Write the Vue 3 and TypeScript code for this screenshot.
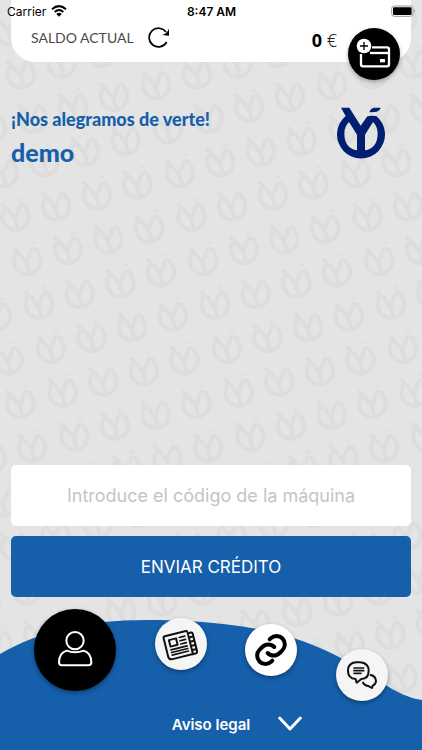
<script setup lang="ts">
import { ref } from 'vue'

interface Mark {
  id: string
  transform: string
}

const code = ref('')
const balance = ref(0)

const logoPath =
  'M122 52H147L181 106L201 78Q210 75 228 77A72 72 0 1 1 136 77Z' +
  'M146 95L170 133V180C145 176 132 158 132 130C132 115 137 103 146 95Z' +
  'M218 95L194 133V180C219 176 232 158 232 130C232 115 227 103 218 95Z'
const accentPath = 'M207 66Q211 53 222 52H241Q236 65 222 65Z'

// Wallpaper lattice: groups of four marks climbing to the right, in third-of-a-pixel units.
const marks: Mark[] = []
for (let row = -5; row < 26; row++) {
  for (let tile = -3; tile < 9; tile++) {
    for (let col = 0; col < 4; col++) {
      const x = 46 + tile * 528 + col * 122 + row * 35.3
      const y = 651 - col * 32.5 + row * 131.7
      if (x > -60 && x < 4200 && y > -60 && y < 3200) {
        marks.push({ id: `${row}.${tile}.${col}`, transform: `translate(${x} ${y})` })
      }
    }
  }
}
</script>

<template>
  <main class="screen">
    <svg class="wallpaper" viewBox="0 0 4200 3000" aria-hidden="true">
      <g v-for="m in marks" :key="m.id" :transform="m.transform">
        <path class="mark" d="M-43 -39L-34 -34L-1 4L14 -34Q26 -42 34 -22A40 40 0 1 1 -31 -25M-1 4L8 38" />
        <path class="mark-accent" d="M6 -49Q12 -58 24 -56Q18 -48 6 -49Z" />
      </g>
    </svg>

    <div class="status">
      <span class="carrier">
        Carrier
        <svg class="wifi" viewBox="0 0 48 36" aria-hidden="true">
          <path d="M3 13Q24 -6 45 13" />
          <path d="M11 21Q24 9 37 21" />
          <path class="wifi-dot" d="M16 27Q24 20 32 27L24 35Z" />
        </svg>
      </span>
      <span class="clock">8:47 AM</span>
      <svg class="battery" viewBox="0 0 75 36" aria-hidden="true">
        <rect class="battery-case" x="2" y="3" width="64" height="31" rx="8" />
        <rect x="6" y="7" width="56" height="23" rx="4" />
        <path class="battery-tip" d="M69 13Q74 18 69 24Z" />
      </svg>
    </div>

    <header class="balance">
      <span class="balance-label">SALDO ACTUAL</span>
      <button class="refresh" type="button" aria-label="Actualizar saldo">
        <svg viewBox="0 0 66 66" aria-hidden="true">
          <path class="arc" d="M54 18A28 28 0 1 0 56 48" />
          <path d="M63 8V29L42 27Q56 24 63 8Z" />
        </svg>
      </button>
      <span class="amount"><b>{{ balance }}</b> €</span>
      <button class="wallet" type="button" aria-label="Añadir saldo">
        <svg viewBox="0 0 156 156" aria-hidden="true">
          <g class="line">
            <path d="M39 78V109Q39 115 45 115H117Q123 115 123 109V64Q123 58 117 58H72" />
            <path d="M66 75H122" />
          </g>
          <rect class="fill" x="96" y="93" width="15" height="10" />
          <circle class="fill" cx="48" cy="54" r="22" />
          <path class="plus" d="M36 54H60M48 42V66" />
        </svg>
      </button>
    </header>

    <section class="welcome">
      <div>
        <h1>¡Nos alegramos de verte!</h1>
        <p class="user-name">demo</p>
      </div>
      <svg class="logo" viewBox="110 50 144 156" role="img" aria-label="Logotipo">
        <path :d="logoPath" fill-rule="evenodd" />
        <path :d="accentPath" />
      </svg>
    </section>

    <form class="credit" @submit.prevent>
      <input v-model="code" type="text" placeholder="Introduce el código de la máquina" aria-label="Código de la máquina" />
      <button type="submit">ENVIAR CRÉDITO</button>
    </form>

    <footer class="bottom">
      <svg class="wave" viewBox="0 0 422 130" preserveAspectRatio="none" aria-hidden="true">
        <path d="M0 34C40 11 86 0 146 0C196 0 246 4 290 17C324 27 350 42 374 58C396 72 408 78 422 80V130H0Z" />
      </svg>
      <nav class="actions" aria-label="Principal">
        <button class="round profile" type="button" aria-label="Perfil">
          <svg viewBox="0 0 246 246" aria-hidden="true">
            <circle cx="123" cy="95" r="26" />
            <path d="M98 125C82 130 75 143 75 160Q75 169 84 169H163Q172 169 172 160C172 143 165 130 149 125Q123 135 98 125Z" />
          </svg>
        </button>
        <button class="round news" type="button" aria-label="Noticias">
          <svg viewBox="0 0 156 156" aria-hidden="true">
            <g transform="rotate(-14 78 80)">
              <path d="M37 44H102Q106 44 106 49V116H43Q32 116 32 105V49Q32 44 37 44Z" />
              <path d="M106 52H116Q120 52 120 57V110Q120 116 114 116H104" />
              <path d="M107 65H118M107 78H118M107 91H118M107 104H118" />
              <rect x="46" y="58" width="22" height="20" />
              <path class="thin" d="M78 58H95M78 68H95M78 78H95M45 88H95M45 96H95M45 104H95" />
            </g>
          </svg>
        </button>
        <button class="round link" type="button" aria-label="Enlaces">
          <svg viewBox="0 0 156 156" aria-hidden="true">
            <path d="M74 46L77 43A25 25 0 0 1 112 79L104 87A25 25 0 0 1 68 87" />
            <path d="M82 110L79 113A25 25 0 0 1 44 77L52 69A25 25 0 0 1 88 69" />
          </svg>
        </button>
        <button class="round chat" type="button" aria-label="Mensajes">
          <svg viewBox="0 0 156 156" aria-hidden="true">
            <path d="M60 40H72Q98 42 98 65Q98 89 76 90L62 101L59 90Q36 88 36 65Q36 42 60 40Z" />
            <path d="M104 78Q119 81 120 96Q119 107 110 110L108 117L99 112Q86 111 81 101" />
            <path class="thin" d="M54 57H83M54 65H83M54 73H75" />
          </svg>
        </button>
      </nav>
      <div class="legal">
        <a href="#aviso-legal">Aviso legal</a>
        <button class="collapse" type="button" aria-label="Ocultar menú">
          <svg viewBox="0 0 72 48" aria-hidden="true"><path d="M5 6L36 39L67 6" /></svg>
        </button>
      </div>
    </footer>
  </main>
</template>

<style>
body {
  margin: 0;
}
</style>

<style scoped>
* {
  box-sizing: border-box;
}

.screen {
  position: relative;
  display: flex;
  flex-direction: column;
  min-height: 100vh;
  overflow: hidden;
  background: #e4e4e4;
  font-family: Inter, "Liberation Sans", sans-serif;
  isolation: isolate;
}

button {
  padding: 0;
  border: 0;
  background: none;
  font: inherit;
  cursor: pointer;
}

svg {
  display: block;
}

.wallpaper {
  position: absolute;
  top: 0;
  left: 0;
  z-index: -1;
  width: 1400px;
  height: 1000px;
}

.mark {
  fill: none;
  stroke: #dddddd;
  stroke-width: 12;
}

.mark-accent {
  fill: #dddddd;
}

.status {
  position: absolute;
  top: 0;
  left: 0;
  right: 0;
  z-index: 1;
  display: grid;
  grid-template-columns: 1fr auto 1fr;
  align-items: center;
  height: 22px;
  padding: 0 6px 0 7px;
  font-size: 12px;
}

.carrier {
  display: flex;
  align-items: center;
  gap: 5px;
}

.wifi {
  width: 16px;
  height: 12px;
  fill: none;
  stroke: #000;
  stroke-width: 6;
}

.wifi .wifi-dot {
  fill: #000;
  stroke: none;
}

.clock {
  font-weight: 600;
}

.battery {
  justify-self: end;
  width: 25px;
  height: 12px;
}

.battery-case {
  fill: #fff;
  stroke: #999;
  stroke-width: 3;
}

.battery-tip {
  fill: #888;
}

.balance {
  position: relative;
  display: flex;
  align-items: center;
  height: 62px;
  margin: 0 11px;
  padding: 22px 74px 10px 20px;
  border-radius: 0 0 24px 24px;
  background: #fff;
}

.balance-label {
  color: #4a4a4a;
  font-family: Lato, sans-serif;
  font-size: 14px;
}

.refresh {
  width: 22px;
  height: 22px;
  margin-left: 14px;
}

.refresh .arc {
  fill: none;
  stroke: #000;
  stroke-width: 5;
}

.amount {
  margin-left: auto;
  padding-top: 6px;
  color: #222;
  font-family: "Noto Sans", sans-serif;
  font-size: 18px;
  font-weight: 300;
}

.amount b {
  color: #000;
  font-weight: 700;
}

.wallet {
  position: absolute;
  top: 28px;
  right: 11px;
  width: 52px;
  height: 52px;
  border-radius: 50%;
  background: #000;
  box-shadow: 0 2px 4px rgba(0, 0, 0, 0.3);
}

.wallet .line {
  fill: none;
  stroke: #fff;
  stroke-width: 7;
}

.wallet .fill {
  fill: #fff;
}

.wallet .plus {
  stroke: #000;
  stroke-width: 4;
}

.welcome {
  display: flex;
  justify-content: space-between;
  align-items: flex-start;
  padding: 45px 37px 0 11px;
  color: #155fab;
  font-family: Lato, sans-serif;
}

.welcome h1,
.user-name {
  margin: 0;
  font-weight: 900;
}

.welcome h1 {
  font-size: 18px;
  line-height: 24px;
}

.user-name {
  margin-top: 5px;
  font-size: 25px;
  line-height: 32px;
}

.logo {
  width: 48px;
  height: 52px;
  fill: #001f70;
}

.credit {
  display: flex;
  flex-direction: column;
  gap: 10px;
  margin-top: auto;
  padding: 24px 11px 12px;
}

.credit input,
.credit button {
  width: 100%;
  height: 61px;
  border: 0;
  border-radius: 5px;
  text-align: center;
}

.credit input {
  padding: 0 16px;
  background: #fff;
  color: #222;
  font: 400 18px Inter, "Liberation Sans", sans-serif;
}

.credit input::placeholder {
  color: #c4c4c6;
  opacity: 1;
}

.credit button {
  background: #155fab;
  color: #fff;
  font-size: 17px;
}

.bottom {
  position: relative;
}

.wave {
  position: absolute;
  left: 0;
  bottom: 0;
  z-index: -1;
  width: 100%;
  height: 130px;
  fill: #155fab;
}

.actions {
  display: flex;
  justify-content: space-between;
  align-items: flex-start;
  padding: 0 34px;
}

.round {
  width: 52px;
  height: 52px;
  border-radius: 50%;
  background: #f5f5f5;
  box-shadow: 0 2px 4px rgba(0, 0, 0, 0.35);
}

.round svg {
  fill: none;
  stroke: #111;
  stroke-width: 6;
  stroke-linejoin: round;
  stroke-linecap: round;
}

.round .thin {
  stroke-width: 5;
}

.profile {
  width: 82px;
  height: 82px;
  background: #000;
}

.profile svg {
  stroke: #fff;
}

.news {
  margin-top: 9px;
}

.link {
  margin-top: 15px;
  background: #fff;
}

.link svg {
  stroke: #000;
  stroke-width: 12;
}

.chat {
  margin-top: 40px;
}

.legal {
  display: grid;
  grid-template-columns: 1fr auto 1fr;
  align-items: center;
  height: 49px;
  padding-bottom: 3px;
}

.legal a {
  grid-column: 2;
  color: #fff;
  font-size: 15px;
  font-weight: 600;
  text-decoration: none;
}

.collapse {
  width: 24px;
  height: 16px;
  margin-left: 28px;
}

.collapse svg {
  fill: none;
  stroke: #fff;
  stroke-width: 9;
  stroke-linecap: round;
  stroke-linejoin: round;
}
</style>
